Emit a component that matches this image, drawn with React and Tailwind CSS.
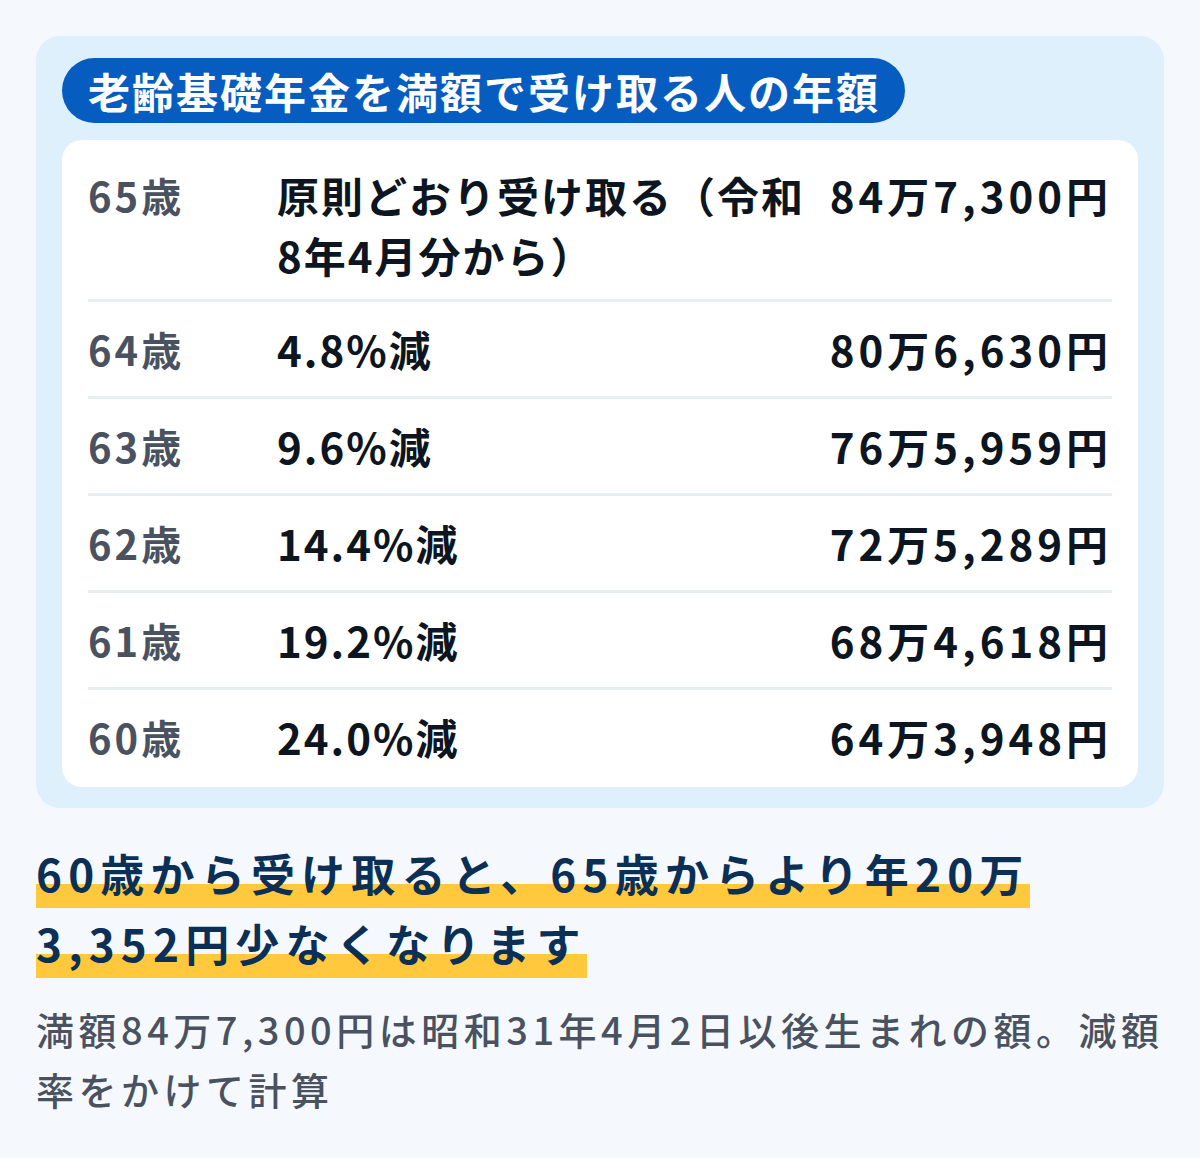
import React from "react";

const rows = [
  { age: "65歳", label: "原則どおり受け取る（令和8年4月分から）", amount: "84万7,300円" },
  { age: "64歳", label: "4.8%減", amount: "80万6,630円" },
  { age: "63歳", label: "9.6%減", amount: "76万5,959円" },
  { age: "62歳", label: "14.4%減", amount: "72万5,289円" },
  { age: "61歳", label: "19.2%減", amount: "68万4,618円" },
  { age: "60歳", label: "24.0%減", amount: "64万3,948円" },
];

export default function App() {
  return (
    <div className="min-h-[1158px] w-[1200px] bg-[#f5f9fe] px-[36px] pt-[36px] font-['Noto_Sans_CJK_JP','Noto_Sans',sans-serif]">
      <div className="rounded-[24px] bg-[#ddf0fc] px-[26px] pt-[22px] pb-[21px]">
        <div className="inline-flex h-[65px] items-center rounded-full bg-[#075dbf] pl-[26px] pr-[25px] text-[42px] font-bold leading-none tracking-[2px] text-white">
          老齢基礎年金を満額で受け取る人の年額
        </div>
        <div className="mt-[17px] rounded-[20px] bg-white px-[26px] pt-[8px] pb-[3px]">
          {rows.map((r, i) => (
            <div
              key={r.age}
              className={
                "grid grid-cols-[189px_540px_1fr] leading-[60px] " +
                (i === 0 ? "pt-[17px] pb-[14px] " : "py-[17px] ") +
                (i < rows.length - 1 ? "border-b-[3px] border-[#e9eef3]" : "")
              }
            >
              <div className="text-[40px] font-bold tracking-[3px] text-[#4a5260]">{r.age}</div>
              <div className="text-[42px] font-bold tracking-[2px] text-[#0c1520]">{r.label}</div>
              <div className="whitespace-nowrap text-right text-[42px] font-bold tracking-[4px] text-[#0c1520]">
                {r.amount}
              </div>
            </div>
          ))}
        </div>
      </div>
      <h2 className="mt-[30px] text-[44px] font-bold leading-[70px] tracking-[6.2px] text-[#0b2f55]">
        <span className="bg-[linear-gradient(transparent_64%,#ffc83d_64%)] pb-[3px] [box-decoration-break:clone] [-webkit-box-decoration-break:clone]">
          60歳から受け取ると、65歳からより年20万3,352円少なくなります
        </span>
      </h2>
      <p className="mt-[21px] text-[38px] font-medium leading-[60px] tracking-[4.5px] text-[#4a5260]">
        満額84万7,300円は昭和31年4月2日以後生まれの額。減額率をかけて計算
      </p>
    </div>
  );
}
